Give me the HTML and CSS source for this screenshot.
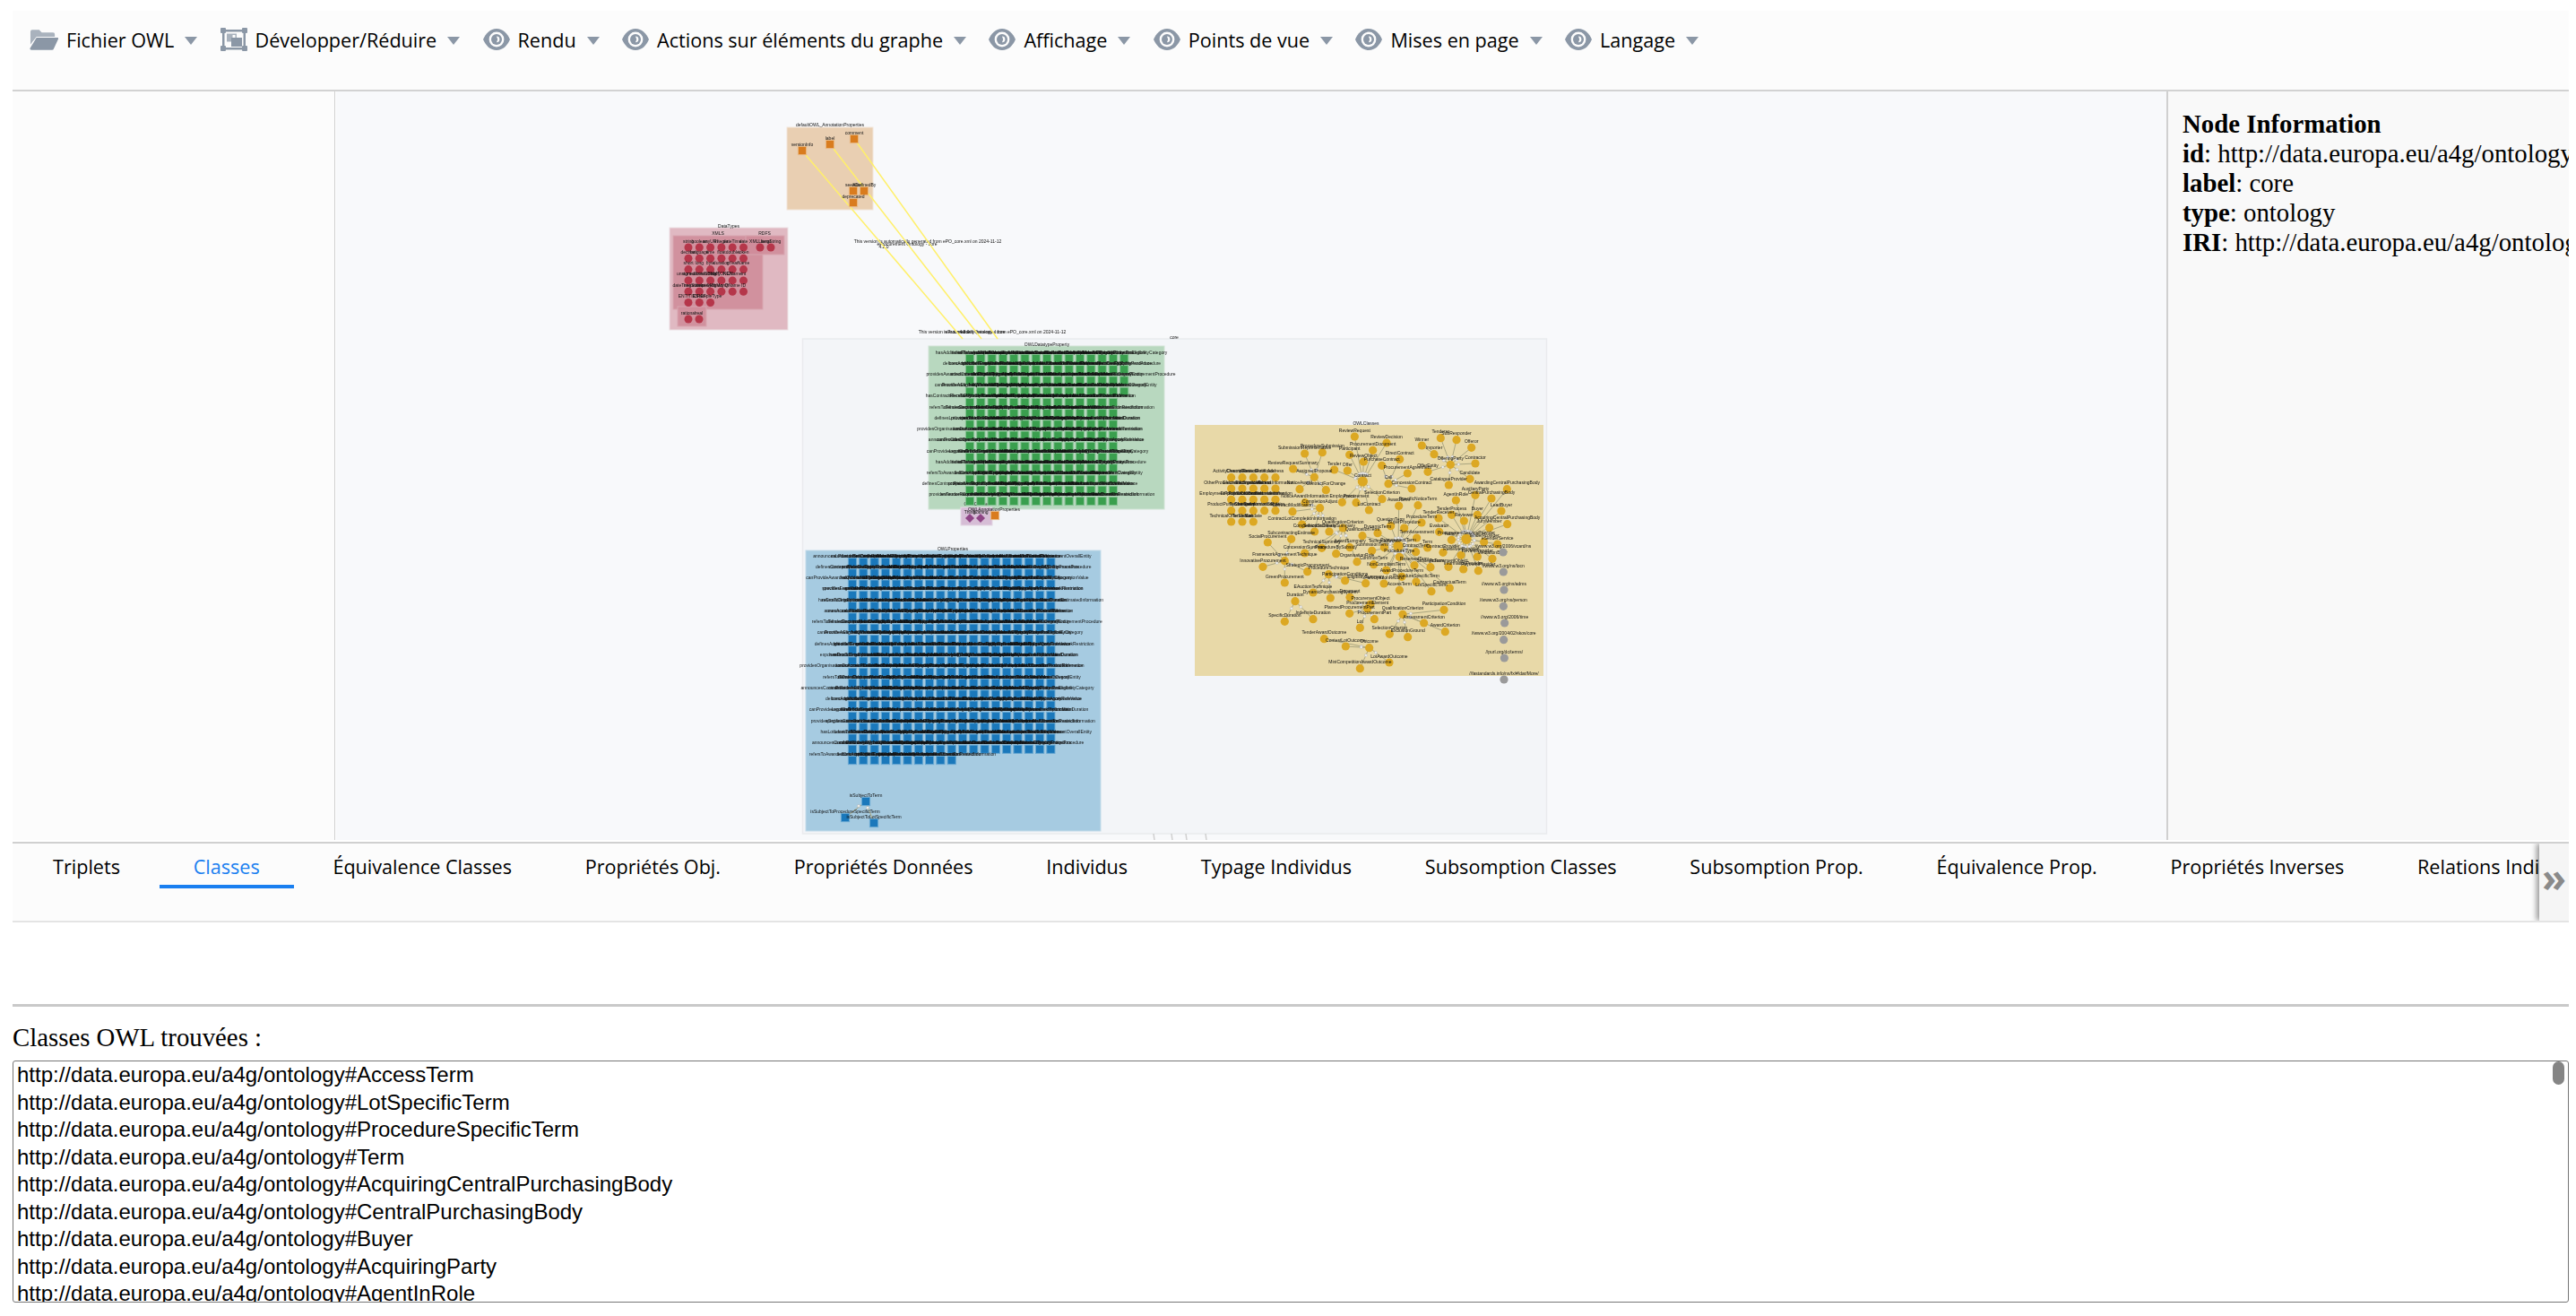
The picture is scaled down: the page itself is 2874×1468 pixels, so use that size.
FILE: index.html
```html
<!DOCTYPE html>
<html lang="fr">
<head>
<meta charset="utf-8">
<title>OWL</title>
<link rel="stylesheet" href="styles.css">
</head>
<body>
<svg class="defs" width="0" height="0" aria-hidden="true">
  <symbol id="eye" viewBox="0 0 30 24">
    <path fill="#8b97a6" d="M15 0C8 0 3 5 0 12c3 7 8 12 15 12s12-5 15-12C27 5 22 0 15 0z"/>
    <circle cx="15" cy="12" r="8.4" fill="#fcfcfc"/>
    <circle cx="15" cy="12" r="6" fill="#8b97a6"/>
    <path fill="#fcfcfc" d="M15 8.6a3.4 3.4 0 0 1 3.4 3.4 3.4 3.4 0 0 1-3.4 3.2l1.2-3.2z"/>
  </symbol>
</svg>
<nav class="toolbar">
  <div class="menu">
    <svg class="ic-folder" viewBox="0 0 33 24"><path fill="#a9b2bd" d="M1 3a2 2 0 0 1 2-2h8l3 3h13a2 2 0 0 1 2 2v3H8L3 15 1 18z"/><path fill="#8b97a6" d="M8 10h24a1 1 0 0 1 1 1.400l-5 11a2 2 0 0 1-2 1.600H2a1.500 1.500 0 0 1-1.400-2z"/></svg>
    <span>Fichier OWL</span><i class="caret"></i>
  </div>
  <div class="menu">
    <svg class="ic-frame" viewBox="0 0 30 26"><g fill="#8b97a6"><rect x="0" y="0" width="6" height="6" rx="1"/><rect x="24" y="0" width="6" height="6" rx="1"/><rect x="0" y="20" width="6" height="6" rx="1"/><rect x="24" y="20" width="6" height="6" rx="1"/><rect x="2" y="2" width="26" height="2.500"/><rect x="2" y="22" width="26" height="2.500"/><rect x="2" y="2" width="2.500" height="22"/><rect x="25.500" y="2" width="2.500" height="22"/><rect x="7" y="6.500" width="11" height="9" fill="#a9b2bd"/><rect x="12" y="11" width="12" height="10"/></g><rect x="13.500" y="8" width="3" height="3" fill="#fcfcfc"/></svg>
    <span>Développer/Réduire</span><i class="caret"></i>
  </div>
  <div class="menu"><svg class="ic-eye"><use href="#eye"/></svg><span>Rendu</span><i class="caret"></i></div>
  <div class="menu"><svg class="ic-eye"><use href="#eye"/></svg><span>Actions sur éléments du graphe</span><i class="caret"></i></div>
  <div class="menu"><svg class="ic-eye"><use href="#eye"/></svg><span>Affichage</span><i class="caret"></i></div>
  <div class="menu"><svg class="ic-eye"><use href="#eye"/></svg><span>Points de vue</span><i class="caret"></i></div>
  <div class="menu"><svg class="ic-eye"><use href="#eye"/></svg><span>Mises en page</span><i class="caret"></i></div>
  <div class="menu"><svg class="ic-eye"><use href="#eye"/></svg><span>Langage</span><i class="caret"></i></div>
</nav>
<main class="workspace">
  <aside class="sidebar"></aside>
  <section class="graph"><svg id="graph" class="graph-svg" viewBox="375 103 2042 835"></svg></section>
  <aside class="info">
    <div><b>Node Information</b></div>
    <div><b>id</b>: http://data.europa.eu/a4g/ontology</div>
    <div><b>label</b>: core</div>
    <div><b>type</b>: ontology</div>
    <div><b>IRI</b>: http://data.europa.eu/a4g/ontology</div>
  </aside>
</main>
<div class="tabbar">
  <div class="tabs">
    <a class="tab">Triplets</a>
    <a class="tab active">Classes</a>
    <a class="tab">Équivalence Classes</a>
    <a class="tab">Propriétés Obj.</a>
    <a class="tab">Propriétés Données</a>
    <a class="tab">Individus</a>
    <a class="tab">Typage Individus</a>
    <a class="tab">Subsomption Classes</a>
    <a class="tab">Subsomption Prop.</a>
    <a class="tab">Équivalence Prop.</a>
    <a class="tab">Propriétés Inverses</a>
    <a class="tab">Relations Individus</a>
  </div>
  <div class="more">»</div>
</div>
<hr class="rule">
<p class="list-title">Classes OWL trouvées :</p>
<div class="listwrap">
  <div id="classes" class="listbox"></div>
  <div class="thumb"></div>
</div>
<script src="graph.js"></script>
</body>
</html>
```
FILE: styles.css
```css
html, body { height: 100%; }
body {
  margin: 0;
  padding: 12px 8px 0 14px;
  box-sizing: border-box;
  background: #fff;
  overflow: hidden;
  font-family: "Liberation Serif", serif;
  color: #000;
}
.defs { position: absolute; }
.toolbar {
  height: 88px;
  padding-left: 19px;
  display: flex;
  align-items: flex-start;
  gap: 25.300px;
  background: #fcfcfc;
  border-bottom: 2px solid #d2d2d2;
  font: 21.600px "Open Sans", sans-serif;
}
.menu {
  display: flex;
  align-items: center;
  height: 64px;
  white-space: nowrap;
}
.menu span { margin-left: 9px; }
.ic-folder { width: 32px; height: 24px; }
.ic-frame { width: 30px; height: 26px; }
.ic-eye { width: 30px; height: 24px; }
.caret {
  width: 0;
  height: 0;
  margin-left: 12px;
  margin-top: 3px;
  border-left: 7px solid transparent;
  border-right: 7px solid transparent;
  border-top: 9px solid #8b97a6;
}
.workspace {
  height: 836px;
  display: flex;
}
.sidebar {
  width: 359px;
  background: #fcfcfc;
  border-right: 1px solid #d0d0d0;
  margin-bottom: 1px;
}
.graph {
  margin-left: 1px;
  width: 2042px;
  height: 835px;
  background: #f8f9fb;
}
.graph-svg { display: block; width: 2042px; height: 835px; }
.info {
  flex: 1;
  min-width: 0;
  overflow: hidden;
  white-space: nowrap;
  box-sizing: border-box;
  padding: 20px 0 0 16px;
  height: 835px;
  border-left: 2px solid #d0d0d0;
  background: #f9f9f9;
  font-size: 28.800px;
  line-height: 33px;
}
.tabbar {
  position: relative;
  height: 86px;
  background: #fcfcfc;
  border-top: 2px solid #d0d0d0;
  border-bottom: 2px solid #e4e4e4;
  margin-top: 1px;
  overflow: hidden;
  font: 21.600px "Open Sans", sans-serif;
}
.tabs {
  display: flex;
  padding-left: 7px;
  gap: 5.700px;
  white-space: nowrap;
}
.tab {
  padding: 8px 38px 0;
  height: 38px;
  line-height: 35px;
  flex: none;
}
.tab.active {
  color: #1a7ff0;
  border-bottom: 4px solid #1a7ff0;
}
.more {
  position: absolute;
  top: 0;
  right: 0;
  bottom: 0;
  width: 33px;
  background: #f5f5f5;
  box-shadow: -3px 0 6px rgba(0,0,0,.4);
  color: #8a8a8a;
  font-weight: 700;
  font-size: 44px;
  line-height: 74px;
  text-align: center;
}
.rule {
  margin: 91px 0 0;
  border: 0;
  height: 3px;
  background: #c9c9c9;
}
.list-title {
  margin: 18px 0 0;
  font-size: 28.800px;
  line-height: 32px;
}
.listwrap {
  position: relative;
  margin-top: 10px;
  height: 270px;
}
.listbox {
  box-sizing: border-box;
  height: 100%;
  border: 1.500px solid #767676;
  border-radius: 3px;
  overflow-y: scroll;
  padding-left: 4px;
  font: 24px/29px "Liberation Sans", Arial, sans-serif;
}
.listbox div { height: 30.500px; }
.thumb {
  position: absolute;
  top: 1px;
  right: 5px;
  width: 13px;
  height: 26px;
  border-radius: 7px;
  background: #858585;
}
.graph-svg .blur { filter: blur(.55px); }
.graph-svg text {
  font-family: "Liberation Sans", sans-serif;
  font-size: 5px;
  fill: #111;
  text-anchor: middle;
}
.edge { stroke: #aaa57f; stroke-width: 1; }
.mini { fill: #f1f1ee; stroke: #aaa; stroke-width: .4; }
.yellow { stroke: #fff06a; stroke-width: 1.500; }
.stub { stroke: #cfcfcf; stroke-width: 1.500; }
.box-core { fill: #f3f5f8; stroke: #e9ebee; stroke-width: 1.500; }
.box-ann { fill: #e9cfb2; stroke: #f1e6da; stroke-width: 1; }
.box-dt { fill: #e0b9c2; stroke: #ece0e3; stroke-width: 1; }
.box-dt2 { fill: #cf8d9a; stroke: #d8a6b0; stroke-width: 1; fill-opacity: .9; }
.box-green { fill: #b8d8bf; stroke: #d0e4d4; stroke-width: 1; }
.box-blue { fill: #a6cbe1; stroke: #c4dce9; stroke-width: 1; }
.box-yellow { fill: #e8d9a8; }
.box-purple { fill: #d6bdd6; stroke: #e4d8e4; stroke-width: 1; }
.n-orange { fill: #d97c1e; stroke: #e8ba86; }
.n-green { fill: #3a9f4e; stroke: #87c294; }
.n-blue { fill: #1a78bb; stroke: #6aa9d2; }
.n-red { fill: #b5364a; }
.n-purple { fill: #8e4585; }
.n-gold { fill: #dca823; }
.n-grey { fill: #9a9a9a; }
```
FILE: graph.js
```js
(function () {
  var NS = 'http://www.w3.org/2000/svg';
  var svg = document.getElementById('graph');
  var g = document.createElementNS(NS, 'g');
  g.setAttribute('class', 'blur');
  svg.appendChild(g);

  function el(tag, attrs, text) {
    var e = document.createElementNS(NS, tag);
    for (var k in attrs) e.setAttribute(k, attrs[k]);
    if (text) e.textContent = text;
    g.appendChild(e);
    return e;
  }
  function box(x1, y1, x2, y2, cls) {
    el('rect', { x: x1, y: y1, width: x2 - x1, height: y2 - y1, 'class': cls });
  }
  function label(x, y, t) { el('text', { x: x, y: y, dy: '1.7' }, t); }
  function square(x, y, cls) { el('rect', { x: x - 4.6, y: y - 4.6, width: 9.2, height: 9.2, 'class': cls }); }
  function circle(x, y, r, cls) { el('circle', { cx: x, cy: y, r: r, 'class': cls }); }
  function diamond(x, y, cls) {
    el('polygon', { points: (x - 5) + ',' + y + ' ' + x + ',' + (y - 5) + ' ' + (x + 5) + ',' + y + ' ' + x + ',' + (y + 5), 'class': cls });
  }

  /* compound boxes */
  box(895.5, 379, 1725.5, 931, 'box-core');
  box(878, 143, 974, 235, 'box-ann');
  box(747, 255, 879, 369, 'box-dt');
  box(751, 264, 851, 346, 'box-dt2');
  box(832, 264, 875, 285, 'box-dt2');
  box(756, 343, 788, 365, 'box-dt2');
  box(1036, 387, 1299, 569, 'box-green');
  box(1072, 567, 1107, 587, 'box-purple');
  box(899, 615, 1228, 928, 'box-blue');
  box(1333, 475, 1722, 755, 'box-yellow');

  /* titles */
  label(926, 140, 'defaultOWL_AnnotationProperties');
  label(813, 253, 'DataTypes');
  label(801, 261, 'XMLS');
  label(853, 261, 'RDFS');
  label(1168, 385, 'OWLDatatypeProperty');
  label(1063, 613, 'OWLProperties');
  label(1524, 473, 'OWLClasses');
  label(1310, 377, 'core');
  label(1090, 563, 'OWLClasses');
  label(1109, 569, 'OWLAnnotationProperties');
  label(1035, 270, 'This version is automatically generated from ePO_core.xml on 2024-11-12');
  label(1012, 273, 'eProcurement Ontology - core');
  label(986, 276, '4.2.0');
  label(1107, 371, 'This version is automatically generated from ePO_core.xml on 2024-11-12');
  label(1088, 371, 'eProcurement Ontology - core');
  label(1076, 371, '4.2.0');

  /* annotation properties */
  [[899, 174, 1074, 379], [930, 167, 1095, 379], [956, 160, 1113, 379]].forEach(function (l) {
    el('line', { x1: l[0], y1: l[1], x2: l[2], y2: l[3], 'class': 'yellow' });
  });
  [[895, 169, 'versionInfo'], [926, 162, 'label'], [953, 156, 'comment'],
   [952, 214, 'seeAlso'], [964, 214, 'isDefinedBy'], [952, 227, 'deprecated']].forEach(function (n) {
    square(n[0], n[1], 'n-orange');
    label(n[0], n[1] - 7.2, n[2]);
  });

  /* data types */
  var dt = ['string', 'boolean', 'anyURI', 'integer', 'dateTime', 'date',
    'decimal', 'language', 'time', 'float', 'double', 'token',
    'short', 'long', 'byte', 'duration', 'gYear', 'Name',
    'unsignedInt', 'normalizedString', 'hexBinary', 'NMTOKEN', 'NCName', 'int',
    'dateTimeStamp', 'negativeInteger', 'base64Binary', 'gMonth', 'QName', 'ID',
    'ENTITIES', 'IDREF', 'simpleType'];
  var i = 0;
  for (var r = 0; r < 6; r++) {
    for (var c = 0; c < (r === 5 ? 3 : 6); c++) {
      var x = 768 + c * 12.3, y = 277 + r * 12.3;
      circle(x, y, 4.5, 'n-red');
      label(x, y - 7.2, dt[i++]);
    }
  }
  [[768, 357, 'rational'], [780, 357, 'real'], [848, 277, 'XMLLiteral'], [860, 277, 'langString']].forEach(function (n) {
    circle(n[0], n[1], 4.5, 'n-red');
    label(n[0], n[1] - 7.2, n[2]);
  });

  /* property name generator */
  var a = ['has', 'is', 'refersTo', 'concerns', 'defines', 'specifies', 'provides', 'uses', 'announces', 'describes', 'canProvide', 'exposes'];
  var b = ['Additional', 'Accession', 'Awarded', 'Estimated', 'Contract', 'Procurement', 'Tender', 'Framework', 'Lot', 'Notice', 'Organisation', 'Eligibility', 'Cross', 'Main', 'Legal', 'Overall'];
  var d = ['Value', 'Document', 'Information', 'Term', 'Procedure', 'Requirement', 'Restriction', 'Description', 'Reference', 'Criterion', 'Category', 'Location', 'Duration', 'Date', 'Entity', 'Receiver'];
  function name(n) {
    var s = a[n % a.length] + b[(n * 7) % b.length] + d[(n * 5 + 3) % d.length];
    if (n % 2 === 0) s += b[(n * 3 + 1) % b.length] + d[(n * 11) % d.length];
    return s;
  }

  /* datatype properties */
  var n = 0;
  for (r = 0; r < 14; r++) {
    var cols = r < 4 ? 15 : 14;
    for (c = 0; c < cols; c++) {
      x = 1082 + c * 12.3; y = 401 + r * 12.23;
      square(x, y, 'n-green');
    }
    for (c = 0; c < cols; c++) {
      x = 1082 + c * 12.3; y = 401 + r * 12.23;
      label(x, y - 7.2, name(n++));
    }
  }

  /* object properties */
  for (r = 0; r < 19; r++) {
    cols = r === 18 ? 10 : 19;
    for (c = 0; c < cols; c++) {
      square(951 + c * 12.3, 628 + r * 12.28, 'n-blue');
    }
    for (c = 0; c < cols; c++) {
      label(951 + c * 12.3, 628 + r * 12.28 - 7.2, name(n++));
    }
  }
  el('line', { x1: 966, y1: 895, x2: 943, y2: 913, 'class': 'edge' });
  el('line', { x1: 966, y1: 895, x2: 975, y2: 919, 'class': 'edge' });
  circle(958, 900, 1.6, 'mini');
  circle(968, 902, 1.6, 'mini');
  [[966, 895, 'isSubjectToTerm'], [943, 913, 'isSubjectToProcedureSpecificTerm'], [975, 919, 'isSubjectToLotSpecificTerm']].forEach(function (m) {
    square(m[0], m[1], 'n-blue');
    label(m[0], m[1] - 7.2, m[2]);
  });

  /* misc small nodes */
  diamond(1082, 579, 'n-purple');
  diamond(1094, 579, 'n-purple');
  label(1082, 572, 'Thing');
  label(1094, 572, 'Nothing');
  square(1110, 576, 'n-orange');
  [[1287, 931], [1307, 931], [1323, 931], [1345, 931]].forEach(function (s) {
    el('line', { x1: s[0], y1: s[1], x2: s[0] + 1, y2: s[1] + 7, 'class': 'stub' });
  });

  /* classes: coordinates given on a 3x grid anchored at the OWL classes box */
  function X(v) { return 1320 + v / 3; }
  function Y(v) { return 460 + v / 3; }
  var clusters = [
    { h: [601, 234, 'Contract'], big: true, n: [[574, 84, 'ReviewRequest'], [681, 105, 'ReviewDecision'], [635, 130, 'ProcurementDocument'], [557, 145, 'Participant'], [604, 168, 'ReviewObject'], [506, 195, 'Tender'], [550, 198, 'Offer'], [532, 304, 'Employment'], [579, 305, 'Procurement'], [622, 330, 'LotContract'], [666, 293, 'SelectionCriterion']] },
    { h: [687, 242, 'Call'], n: [[725, 160, 'DirectContract'], [665, 181, 'PurchaseContract'], [751, 207, 'ProcurementAgreement'], [765, 258, 'ConcessionContract']] },
    { h: [895, 178, 'OfferingParty'], n: [[862, 89, 'Tenderer'], [915, 95, 'SubResponder'], [965, 121, 'Offeror'], [978, 174, 'Contractor'], [960, 226, 'Candidate'], [889, 246, 'CatalogueProvider'], [819, 202, 'OfferEntity'], [840, 143, 'Importer'], [799, 114, 'Winner']] },
    { h: [439, 220, 'AssignedProposal'], n: [[407, 141, 'SubmissionRepresentative'], [466, 137, 'ProcedureSubmission'], [368, 192, 'ReviewRequestSummary'], [478, 263, 'ContractForChange'], [390, 260, 'NoticeAward']] },
    { h: [458, 323, 'CompletionAdjust'], n: [[408, 305, 'NoticeAwardInformation'], [366, 335, 'ContractModification'], [398, 378, 'ContractLotCompletionInformation'], [440, 402, 'CompetitionSummary'], [489, 402, 'SelectionCriteriaSummary']] },
    { h: [948, 427, 'ProcurementServiceProvider'], big: true, n: [[913, 297, 'AgentInRole'], [978, 280, 'AuxiliaryParty'], [1032, 291, 'CentralPurchasingBody'], [1065, 333, 'LeadBuyer'], [1084, 260, 'AwardingCentralPurchasingBody'], [1085, 377, 'AcquiringCentralPurchasingBody'], [985, 346, 'Buyer'], [1025, 389, 'JuryMember'], [1007, 437, 'TenderProvider'], [1052, 444, 'eSenderService'], [1035, 493, 'MediationBody'], [985, 486, 'ReviewProvider'], [988, 533, 'PaymentProvider'], [938, 528, 'InformationProvider'], [930, 481, 'ReviewerProvider'], [888, 520, 'ProcurementObject'], [870, 472, 'ContractProvider'], [898, 430, 'Notary'], [857, 403, 'Evaluator'], [899, 346, 'TenderProcess'], [855, 357, 'TenderReceiver'], [940, 366, 'Reviewer']] },
    { h: [720, 450, 'ProcurementTerm'], big: true, n: [[695, 383, 'QuestionTerm'], [740, 390, 'BuyerProcedure'], [722, 316, 'AwardTerm'], [786, 314, 'SpecificNoticeTerm'], [798, 372, 'ProcedureTerm'], [782, 423, 'TermAssessment'], [779, 470, 'ContractTerm'], [818, 456, 'Term'], [774, 515, 'ReservedTerm'], [828, 521, 'StrategicTerm'], [680, 531, 'NonCompliantTerm'], [732, 553, 'AwardProcedureTerm'], [780, 570, 'ProcedureSpecificTerm'], [672, 576, 'ParticipationRecord'], [724, 598, 'AccessTerm'], [831, 602, 'LotSpecificTerm'], [892, 591, 'ContractualTerm'], [632, 466, 'SubmissionTerm'], [651, 407, 'DynamicTerm'], [600, 416, 'QualificationTerm'], [638, 512, 'CommonTerm'], [724, 487, 'ProcedureType'], [673, 455, 'TechnicalAnnex']] },
    { h: [535, 390, 'QualificationCriterion'], n: [[464, 457, 'TechnicalSummary'], [512, 476, 'ProcedureBySubsidy'], [558, 455, 'AwardSummary'], [407, 474, 'ConcessionSummary'], [582, 503, 'OrganisationRole']] },
    { h: [340, 500, 'FrameworkAgreementTechnique'], n: [[283, 438, 'SocialProcurement'], [362, 427, 'SubcontractingEstimate'], [267, 520, 'InnovativeProcurement'], [340, 573, 'GreenProcurement'], [416, 536, 'StrategicProcurement']] },
    { h: [487, 545, 'ProcedureTechnique'], n: [[435, 606, 'EAuctionTechnique'], [493, 624, 'DynamicPurchasingSystem'], [542, 566, 'ParticipationConditions'], [611, 575, 'EligibilitySummary']] },
    { h: [375, 635, 'Duration'], n: [[340, 703, 'SpecificDuration'], [435, 695, 'IndefiniteDuration']] },
    { h: [617, 660, 'ProcurementElement'], n: [[627, 645, 'ProcurementObject'], [558, 622, 'Document'], [557, 676, 'PlannedProcurementPart'], [640, 695, 'ProcurementPart'], [592, 724, 'Lot']] },
    { h: [735, 679, 'QualificationCriterion'], n: [[873, 664, 'ParticipationCondition'], [806, 708, 'AssessmentCriterion'], [877, 737, 'AwardCriterion'], [752, 755, 'ExclusionGround'], [691, 745, 'SelectionCriterion']] },
    { h: [623, 791, 'Outcome'], n: [[472, 761, 'TenderAwardOutcome'], [544, 786, 'ContestLotOutcome'], [690, 840, 'LotAwardOutcome'], [592, 860, 'MiniCompetitionAwardOutcome']] }
  ];
  clusters.forEach(function (cl) {
    cl.n.forEach(function (m) {
      el('line', { x1: X(cl.h[0]), y1: Y(cl.h[1]), x2: X(m[0]), y2: Y(m[1]), 'class': 'edge' });
    });
  });
  clusters.forEach(function (cl) {
    cl.n.forEach(function (m) {
      var dx = m[0] - cl.h[0], dy = m[1] - cl.h[1], len = Math.sqrt(dx * dx + dy * dy);
      circle(X(cl.h[0] + dx / len * 27), Y(cl.h[1] + dy / len * 27), 1.5, 'mini');
    });
  });
  clusters.forEach(function (cl) {
    cl.n.forEach(function (m) { circle(X(m[0]), Y(m[1]), 4.6, 'n-gold'); });
    circle(X(cl.h[0]), Y(cl.h[1]), cl.big ? 5.6 : 4.6, 'n-gold');
  });
  clusters.forEach(function (cl) {
    cl.n.forEach(function (m) { label(X(m[0]), Y(m[1]) - 7.2, m[2]); });
    label(X(cl.h[0]), Y(cl.h[1]) - 7.2, cl.h[2]);
  });

  /* isolated class grid */
  var iso = ['ActivityDescription', 'ChannelFeature', 'ContactPoint', 'Certificate', 'Address',
    'OtherProcedureInformation', 'ElectronicSignature', 'ElectronicAddress', 'Period', 'AccessInformation',
    'EmploymentPositionInformation', 'EmploymentCondition', 'PublicContactInformation', 'CrossBorderLawInformation', 'Identifier',
    'ProductPurityStatement', 'TenderGroup', 'ChangeInformation', 'SubmissionStatistics', 'Rule',
    'TechnicalOfferSection', 'TenderLot', 'Mandate'];
  var gx = [161, 198, 235, 272, 309], gy = [221, 258, 295, 332, 369];
  i = 0;
  gy.forEach(function (yy, rr) {
    gx.slice(0, rr === 4 ? 3 : 5).forEach(function (xx) { circle(X(xx), Y(yy), 4.6, 'n-gold'); });
  });
  gy.forEach(function (yy, rr) {
    gx.slice(0, rr === 4 ? 3 : 5).forEach(function (xx) { label(X(xx), Y(yy) - 7.2, iso[i++]); });
  });

  /* external namespaces */
  [[1071, 471, 'http://www.w3.org/2006/vcard/ns'], [1072, 537, 'http://www.w3.org/ns/locn'], [1074, 597, 'http://www.w3.org/ns/adms'],
   [1072, 652, 'http://www.w3.org/ns/person'], [1076, 708, 'http://www.w3.org/2006/time'], [1073, 764, 'http://www.w3.org/2004/02/skos/core'],
   [1075, 825, 'http://purl.org/dc/terms/'], [1074, 897, 'http://fastandards.info/ns/fx/#/dar/More/']].forEach(function (m) {
    circle(X(m[0]), Y(m[1]), 4.6, 'n-grey');
    label(X(m[0]), Y(m[1]) - 7.2, m[2].replace('http:', ''));
  });

  /* class list */
  var names = ['AccessTerm', 'LotSpecificTerm', 'ProcedureSpecificTerm', 'Term', 'AcquiringCentralPurchasingBody', 'CentralPurchasingBody', 'Buyer', 'AcquiringParty', 'AgentInRole',
    'ActivityDescription', 'Address', 'AuxiliaryParty', 'AwardCriterion', 'AwardDecision', 'AwardOutcome', 'AwardingCentralPurchasingBody', 'Candidate', 'CatalogueProvider', 'ChangeInformation', 'ChannelFeature',
    'Certificate', 'ConcessionContract', 'ContactPoint', 'Contract', 'ContractModification', 'ContractTerm', 'Contractor', 'ContractualTerm', 'CrossBorderLawInformation', 'DirectContract',
    'Document', 'Duration', 'DynamicPurchasingSystemTechnique', 'EAuctionTechnique', 'ElectronicAddress', 'ElectronicSignature', 'EligibilitySummary', 'EmploymentCondition', 'Evaluator', 'ExclusionGround',
    'FrameworkAgreementTechnique', 'GreenProcurement', 'Identifier', 'IndefiniteDuration', 'InformationProvider', 'InnovativeProcurement', 'JuryMember', 'LeadBuyer', 'Lot', 'LotAwardOutcome'];
  var list = document.getElementById('classes');
  names.forEach(function (nm) {
    var row = document.createElement('div');
    row.textContent = 'http://data.europa.eu/a4g/ontology#' + nm;
    list.appendChild(row);
  });
})();
```
